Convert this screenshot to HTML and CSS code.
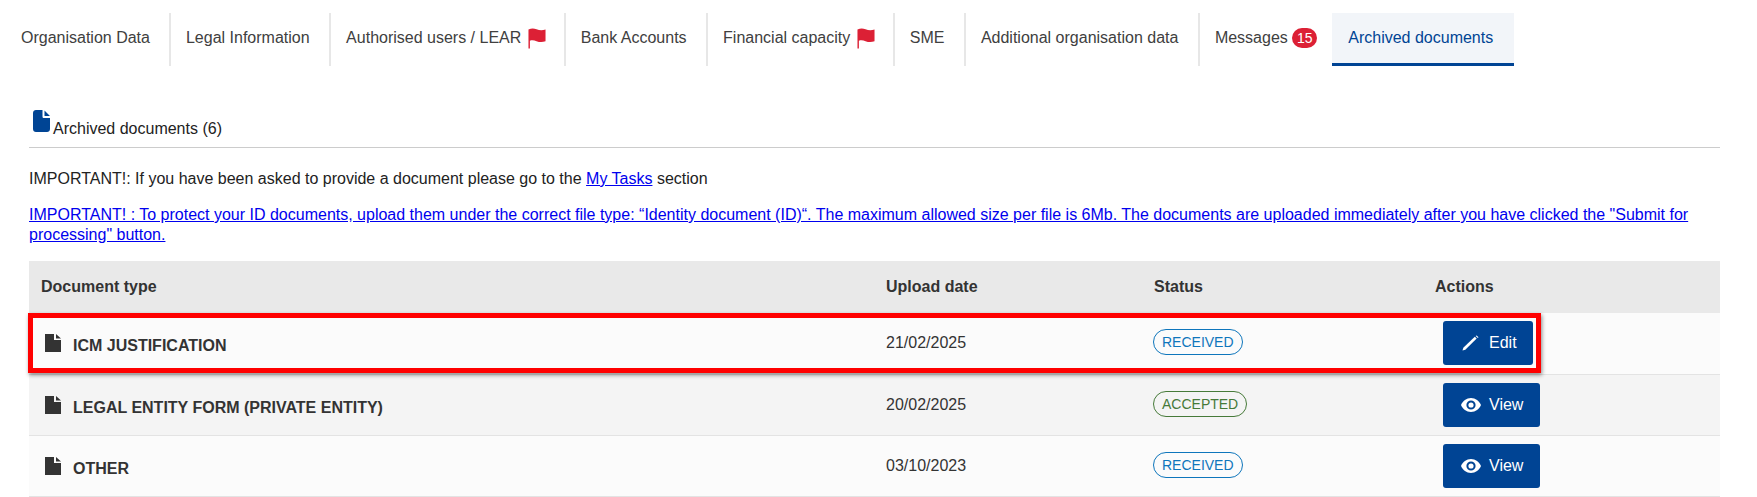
FILE: index.html
```html
<!DOCTYPE html>
<html lang="en">
<head>
<meta charset="utf-8">
<title>Archived documents</title>
<link rel="stylesheet" href="styles.css">
</head>
<body>
<svg class="defs" width="0" height="0" aria-hidden="true">
  <symbol id="flag" viewBox="0 0 19 22"><path d="M0.500 1.500C3.500 0 6 0 9 1.200C12 2.400 15 2.600 18.500 1.500V14C15 15.200 12 15 9 13.800C6.500 12.800 4 12.600 2 13.400V21.500H0.500Z"/></symbol>
  <symbol id="doc" viewBox="0 0 16 18"><path d="M0 0H9V6H16V18H0ZM11 0L16 4.500H11Z"/></symbol>
  <symbol id="eye" viewBox="0 0 20 14"><path fill-rule="evenodd" d="M10 0C5.500 0 1.700 2.900 0 7C1.700 11.100 5.500 14 10 14S18.300 11.100 20 7C18.300 2.900 14.500 0 10 0ZM10 11.600A4.600 4.600 0 1 1 10 2.400A4.600 4.600 0 0 1 10 11.600ZM10 4.400A2.600 2.600 0 1 0 10 9.600A2.600 2.600 0 0 0 10 4.400Z"/></symbol>
</svg>

<nav class="tabs">
  <a class="tab tab-first">Organisation Data</a>
  <a class="tab">Legal Information</a>
  <a class="tab tab-flag">Authorised users / LEAR <svg class="flag"><use href="#flag"/></svg></a>
  <a class="tab">Bank Accounts</a>
  <a class="tab tab-flag">Financial capacity <svg class="flag"><use href="#flag"/></svg></a>
  <a class="tab">SME</a>
  <a class="tab">Additional organisation data</a>
  <a class="tab tab-msg">Messages <span class="count">15</span></a>
  <a class="tab tab-active">Archived documents</a>
</nav>

<main class="content">
  <h2 class="section-title">
    <svg class="section-icon" viewBox="0 0 17 22"><path d="M3 0H9.500V6.500C9.500 7.500 10 8 11 8H17V19C17 20.700 15.700 22 14 22H3C1.300 22 0 20.700 0 19V3C0 1.300 1.300 0 3 0ZM11.500 0.500L17 6H11.500Z"/></svg>
    <span class="section-label">Archived documents (6)</span>
  </h2>
  <p class="note">IMPORTANT!: If you have been asked to provide a document please go to the <a href="#">My Tasks</a> section</p>
  <p class="note note-link"><a href="#">IMPORTANT! : To protect your ID documents, upload them under the correct file type: “Identity document (ID)“. The maximum allowed size per file is 6Mb. The documents are uploaded immediately after you have clicked the "Submit for processing" button.</a></p>

  <div class="table-wrap">
    <table class="docs">
      <colgroup><col class="c1"><col class="c2"><col class="c3"><col class="c4"></colgroup>
      <thead>
        <tr><th>Document type</th><th>Upload date</th><th>Status</th><th>Actions</th></tr>
      </thead>
      <tbody>
        <tr>
          <td><div class="doc"><svg class="doc-icon"><use href="#doc"/></svg><span class="doc-name">ICM JUSTIFICATION</span></div></td>
          <td>21/02/2025</td>
          <td><span class="pill pill-blue">RECEIVED</span></td>
          <td><a class="btn"><svg class="pencil" viewBox="0 0 17 16"><path d="M0.500 15.500L1.300 12.700L12.800 1.700L14.700 3.600L3.300 14.700Z"/><path d="M13.600 0.900L14.700 0.400L16.500 2.200L15.800 3Z"/></svg>Edit</a></td>
        </tr>
        <tr>
          <td><div class="doc"><svg class="doc-icon"><use href="#doc"/></svg><span class="doc-name">LEGAL ENTITY FORM (PRIVATE ENTITY)</span></div></td>
          <td>20/02/2025</td>
          <td><span class="pill pill-green">ACCEPTED</span></td>
          <td><a class="btn btn-view"><svg class="eye"><use href="#eye"/></svg>View</a></td>
        </tr>
        <tr>
          <td><div class="doc"><svg class="doc-icon"><use href="#doc"/></svg><span class="doc-name">OTHER</span></div></td>
          <td>03/10/2023</td>
          <td><span class="pill pill-blue">RECEIVED</span></td>
          <td><a class="btn btn-view"><svg class="eye"><use href="#eye"/></svg>View</a></td>
        </tr>
      </tbody>
    </table>
    <div class="highlight"></div>
  </div>
</main>
</body>
</html>
```

FILE: styles.css
```css
* { box-sizing: border-box; }

html, body {
  margin: 0;
  padding: 0;
  background: #fff;
  overflow: hidden;
}

body {
  height: 497px;
  font-family: "Liberation Sans", Arial, sans-serif;
  font-size: 16px;
  color: #333;
}

.defs { position: absolute; }

.tabs {
  display: flex;
  padding-top: 13px;
  height: 66px;
}

.tab {
  display: flex;
  align-items: center;
  height: 53px;
  padding: 0 19.500px 3px 15px;
  border-right: 2px solid #e7e7e7;
  color: #404040;
  white-space: pre;
}

.tab-first { padding: 0 19px 3px 21px; }

.tab-flag { padding-right: 18px; }

.tab-msg {
  border-right: 0;
  padding-right: 15px;
}

.tab-active {
  padding: 0 0 0 16px;
  width: 182px;
  border-right: 0;
  border-bottom: 3px solid #004494;
  background: #f2f5f9;
  color: #004494;
}

.flag {
  width: 18px;
  height: 21px;
  margin: 1px 0 0 2px;
  fill: #dc2035;
}

.count {
  display: inline-block;
  width: 25px;
  height: 20px;
  border-radius: 10px;
  background: #dc2035;
  color: #fff;
  font-size: 14px;
  line-height: 21px;
  text-align: center;
}

.content {
  margin: 0 37px 0 29px;
}

.section-title {
  display: flex;
  align-items: flex-end;
  gap: 3px;
  height: 82px;
  margin: 0;
  padding: 0 0 14px 4px;
  border-bottom: 1px solid #ccc;
  font-size: 16px;
  font-weight: 400;
  color: #222;
}

.section-label {
  position: relative;
  top: 5px;
}

.section-icon {
  width: 17px;
  height: 22px;
  margin-bottom: 1px;
  fill: #004494;
}

.note {
  margin: 21px 0 0;
  line-height: 20px;
  color: #222;
}

.note a { color: #00e; }

.note-link { margin-top: 16px; }

.table-wrap {
  position: relative;
  margin-top: 16px;
}

.docs {
  width: 100%;
  table-layout: fixed;
  border-collapse: collapse;
}

.c1 { width: 845px; }
.c2 { width: 268px; }
.c3 { width: 281px; }

.docs th {
  height: 52px;
  padding: 0 12px;
  background: #e9e9e9;
  color: #333;
  font-weight: 700;
  text-align: left;
}

.docs td {
  height: 61px;
  padding: 0 12px;
  border-bottom: 1px solid #e3e3e3;
  color: #333;
  vertical-align: middle;
}

.docs tbody tr:nth-child(odd) td { background: #fbfbfb; }
.docs tbody tr:nth-child(even) td { background: #f4f4f4; }

.doc {
  display: flex;
  gap: 12px;
  align-items: flex-start;
  margin-top: 3px;
  padding-left: 4px;
}

.doc-icon {
  width: 16px;
  height: 18px;
  fill: #333;
}

.doc-name {
  margin-top: 3px;
  font-weight: 700;
}

.pill {
  display: inline-block;
  height: 26px;
  padding: 0 8px;
  border: 1px solid;
  border-radius: 13px;
  font-size: 14px;
  line-height: 24px;
  position: relative;
  top: -1px;
  margin-left: -1px;
}

.pill-blue { color: #0e76bc; border-color: #0e76bc; }
.pill-green { color: #467a39; border-color: #467a39; }

.btn {
  display: inline-flex;
  align-items: center;
  gap: 10px;
  height: 44px;
  margin-left: 8px;
  padding: 0 16px 0 19px;
  border-radius: 3px;
  background: #004494;
  color: #fff;
  vertical-align: middle;
}

.btn-view {
  gap: 8px;
  padding: 0 17px 0 18px;
}

.pencil {
  width: 17px;
  height: 16px;
  fill: #fff;
}

.eye {
  width: 20px;
  height: 14px;
  fill: #fff;
}

.highlight {
  position: absolute;
  left: -1px;
  top: 52px;
  width: 1513px;
  height: 60px;
  border: 5px solid #f00;
  box-shadow: 1px 2px 4px rgba(0, 0, 0, 0.45);
  pointer-events: none;
}
```
